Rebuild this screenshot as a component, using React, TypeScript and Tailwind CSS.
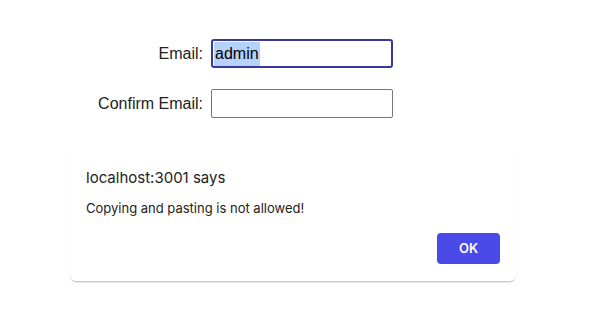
export default function App() {
  return (
    <div className="w-[603px] h-[312px] bg-white overflow-hidden font-['Liberation_Sans',Arial,sans-serif] text-[#222]">
      <div className="pt-[39px]">
        <div className="flex items-center gap-2">
          <label className="w-[203px] text-right text-[16px]">Email:</label>
          <div className="w-[182px] h-[29px] border-2 border-[#3b379c] rounded-[3px] flex items-center pl-[1px]">
            <span className="bg-[#b4d2fb] text-[16px] text-black leading-[24px] px-[1px]">admin</span>
          </div>
        </div>
        <div className="flex items-center gap-2 mt-[21px]">
          <label className="w-[203px] text-right text-[16px]">Confirm Email:</label>
          <input
            type="text"
            className="w-[182px] h-[29px] border border-[#777] rounded-[2px] outline-none px-1"
          />
        </div>
      </div>

      <div className="ml-[70px] mt-[32px] w-[446px] bg-white rounded-b-[6px] shadow-[0_2px_2px_-1px_rgba(0,0,0,0.3)] px-4 pt-[19px] pb-[17px] font-['Inter',sans-serif]">
        <div className="text-[15px] leading-[18px] text-[#222]">localhost:3001 says</div>
        <div className="mt-[13px] text-[13px] leading-[16px] text-[#222]">Copying and pasting is not allowed!</div>
        <div className="flex justify-end mt-[17px]">
          <button className="w-[63px] h-[31px] rounded-[4px] bg-[#4a4ae8] text-white text-[13px] font-semibold">
            OK
          </button>
        </div>
      </div>
    </div>
  );
}
